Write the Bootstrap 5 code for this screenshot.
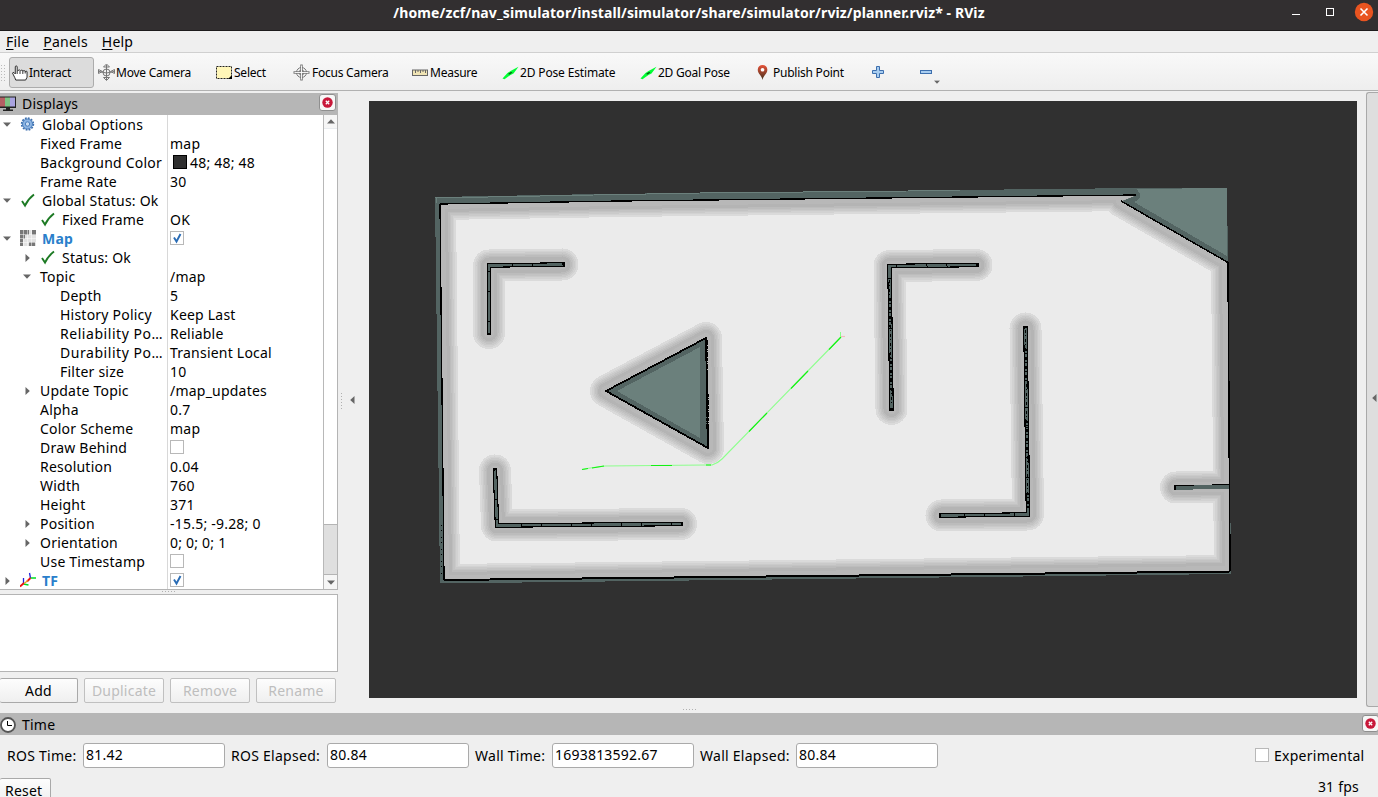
<!DOCTYPE html>
<html lang="en">
<head>
<meta charset="utf-8">
<title>RViz</title>
<link href="https://cdn.jsdelivr.net/npm/bootstrap@5.3.0/dist/css/bootstrap.min.css" rel="stylesheet">
<style>
body{width:1378px;height:797px;overflow:hidden;background:#efefef;color:#000;font:14px/19px "Noto Sans","Open Sans",sans-serif;letter-spacing:.22px}
svg{display:block;flex:none}
.titlebar{height:31px;background:#322f30;border-bottom:1px solid #1d1b1c;color:#fff;font-weight:700;font-size:14px;letter-spacing:.1px;line-height:26px}
.winbtns{right:4px;top:2px}
.menus{height:21px;padding-left:6px;gap:14px;line-height:22px}
.menus u{text-underline-offset:2px}
.tools{height:39px;border-top:1px solid #d0d0d0;border-bottom:1px solid #b1b1b1;background:linear-gradient(#f9f9f9,#eee);font-size:12px;letter-spacing:-.24px}
.tool{height:31px;margin-top:4px;line-height:30px;white-space:nowrap}
.tool.on{background:#dcdcdc;border:1px solid #acacac;border-radius:3px}
.tool svg{margin-right:1px}
.grip{width:5px;height:17px;background:radial-gradient(circle,#bbb 0 .6px,transparent .9px) 0 0/3px 3px}
.mid{height:622px;padding-top:2px}
.dock{width:338px}
.dhead{height:22px;background:#b6b6b6;line-height:22px}
.closebtn{width:17px;height:17px;border:1px solid #8f8f8f;border-radius:3px;background:#f7f7f7}
.tree{height:475px;background:#fff;border-right:1px solid #b4b4b4;border-bottom:1px solid #b4b4b4;overflow:hidden}
.tcol1{width:168px;border-right:1px solid #d8d8d8}
.trow{height:19px;white-space:nowrap;line-height:19px}
.lv1{padding-left:20px}.lv2{padding-left:40px}
.tw{width:14px;margin-right:6px;flex:none;display:flex;justify-content:center}
.ic{width:16px;margin-right:6px;margin-top:-2px;flex:none}
.tcol2{padding-left:2px}
.disp{color:#2a7fcb;font-weight:700}
.cbox{width:14px;height:14px;border:1px solid #b8b8b8;background:#fff;flex:none}
.trow .cbox{margin-top:-2px}
.sbar{width:14px;border-left:1px solid #b8b8b8;background:#fff}
.sbtn{height:14px;background:#f6f6f6}
.thumb{height:51px;background:#dfdfdf;border-top:1px solid #b4b4b4;border-bottom:1px solid #b4b4b4}
.help{height:78px;background:#fff;border:1px solid #b4b4b4;border-left:0}
.dots{background:radial-gradient(circle,#b0b0b0 0 .6px,transparent .9px) 0 0/3px 3px}
.qbtn{height:25px;border:1px solid #a9a9a9;border-radius:2px;background:linear-gradient(#fdfdfd,#efefef);text-align:center;line-height:23px}
.qbtn.off{color:#bebebe;border-color:#c0c0c0}
.view{width:988px;height:597px;margin-top:8px}
.strip{width:12px;height:615px;margin-left:9px;margin-top:-1px;padding-bottom:4px;border:1px solid #a9a9a9;border-right:0;border-radius:3px 0 0 3px;background:#dedede}
.timerow{height:27px;margin-top:7px}
.timerow span{white-space:nowrap;letter-spacing:.27px}
.field{width:142px;height:25px;border:1px solid #aaa;border-radius:3px;background:#fff;padding-left:2px;line-height:22px}
</style>
</head>
<body>
<svg width="0" height="0" class="position-absolute">
<defs>
<symbol id="dn" viewBox="0 0 8 5"><path d="M0 .5h8L4 4.8z" fill="#666"/></symbol>
<symbol id="rt" viewBox="0 0 5 8"><path d="M.5 0v8L4.800 4z" fill="#666"/></symbol>
<symbol id="ok" viewBox="0 0 16 16"><path d="M2 9l3 4.500C7 9.500 10 5.500 14 2.500" fill="none" stroke="#1d7a24" stroke-width="1.900"/></symbol>
<symbol id="tick" viewBox="0 0 12 12"><path d="M3 5.500l2.500 4L9.500 2" fill="none" stroke="#2a6cb5" stroke-width="1.900"/></symbol>
<symbol id="cross" viewBox="0 0 11 11"><circle cx="5.500" cy="5.500" r="5.200" fill="#c8183a"/><path d="M3.800 3.800l3.400 3.400m0-3.400L3.800 7.200" stroke="#fff" stroke-width="1.300"/></symbol>
<symbol id="arrow" viewBox="0 0 16 14"><path d="M0 12.500L5 7l3-2L16 .8 11 7.500 8 9 2 13.200z" fill="#0f3"/><path d="M5.500 8l3-2 1.500.5-3 2z" fill="#0a4a14"/></symbol>
</defs>
</svg>

<header class="titlebar position-relative text-center">/home/zcf/nav_simulator/install/simulator/share/simulator/rviz/planner.rviz* - RViz
<svg class="winbtns position-absolute" width="84" height="20"><path d="M2 12.500h8" stroke="#fff"/><rect x="36.500" y="6.500" width="7" height="7" fill="none" stroke="#fff"/><circle cx="74" cy="10" r="9.200" fill="#e95420"/><path d="M70.500 6.500l7 7m0-7l-7 7" stroke="#fff" stroke-width="1.600"/></svg>
</header>
<nav class="menus d-flex"><span><u>F</u>ile</span><span><u>P</u>anels</span><span><u>H</u>elp</span></nav>

<div class="tools d-flex">
 <div class="grip" style="margin-top:11px"></div>
 <div class="tool on d-flex align-items-center ms-1" style="width:85px;padding-left:2px">
  <svg width="16" height="16" viewBox="0 0 17 16"><path d="M5.500 9V1.500q0-1-1-1t-1 1V9L2 7.500q-1-.5-1.500.5L3 13l1 2.500h10.500l1.500-3V6.500q-1-1-2 0 0-1-1-1t-1.500.5q0-1-1-1t-1.500.5q-1-1.500-3 0" fill="#fff" stroke="#222"/><path d="M8.500 6v3m3-3v3m2.500-2.500v2" stroke="#222"/></svg>Interact</div>
 <div class="tool d-flex align-items-center" style="margin-left:4px;width:118px">
  <svg width="17" height="17" viewBox="0 0 17 17" fill="none" stroke="#777"><path d="M8.500 1v15M1 7.500q7.500 3 15 0M8.500 0l-3 3h6zM8.500 16.500l-3-3h6zM.5 5.500v4l4-2zM16.500 5.500v4l-4-2z"/><circle cx="8.500" cy="8.500" r="3.500"/></svg>Move Camera</div>
 <div class="tool d-flex align-items-center" style="width:77px">
  <svg width="17" height="14" viewBox="0 0 17 14"><rect x=".5" y=".5" width="15" height="12" fill="#fff6b8" stroke="#222" stroke-dasharray="2 1"/><path d="M16 9v4h-4z"/></svg>Select</div>
 <div class="tool d-flex align-items-center" style="width:119px">
  <svg width="18" height="17" viewBox="0 0 18 17" fill="none" stroke="#777"><circle cx="8.500" cy="8.500" r="5"/><circle cx="8.500" cy="8.500" r="2.500"/><path d="M8.500.500v16M.500 8.500h16" stroke-width="2.500"/><path d="M8.500 1.500v14M1.500 8.500h14" stroke="#fff" stroke-width=".9"/></svg>Focus Camera</div>
 <div class="tool d-flex align-items-center" style="width:90px">
  <svg width="17" height="8" viewBox="0 0 17 8"><rect x=".5" y="1" width="15" height="5.500" fill="#f0e4b4" stroke="#666"/><path d="M3.500 1v3m2.500-3v2m2.500-2v3m2.500-3v2m2.500-2v3" stroke="#666"/></svg>Measure</div>
 <div class="tool d-flex align-items-center" style="width:138px;letter-spacing:-.15px"><svg width="17" height="14"><use href="#arrow"/></svg>2D Pose Estimate</div>
 <div class="tool d-flex align-items-center" style="width:117px"><svg width="17" height="14"><use href="#arrow"/></svg>2D Goal Pose</div>
 <div class="tool d-flex align-items-center" style="width:114px">
  <svg width="12" height="17" viewBox="0 0 13 17" class="me-1"><defs><linearGradient id="pin" x2="0" y2="1"><stop stop-color="#e8533a"/><stop offset="1" stop-color="#42301c"/></linearGradient></defs><path d="M6 16.500C5.500 12 .8 10 .8 5.500a5.200 5.200 0 0110.400 0C11.200 10 6.500 12 6 16.500z" fill="url(#pin)"/><circle cx="6" cy="5.500" r="2" fill="#fff"/></svg>Publish Point</div>
 <div class="tool d-flex align-items-center"><svg width="14" height="14" viewBox="0 0 14 14"><path d="M5.500 .5h3v4h4v3h-4v4h-3v-4h-4v-3h4z" fill="#a8cdf0" stroke="#3d6fae"/></svg></div>
 <div class="tool d-flex align-items-center position-relative" style="margin-left:34px"><svg width="13" height="5"><rect x=".5" y=".5" width="11" height="3" fill="#a8cdf0" stroke="#3d6fae"/></svg><svg class="position-absolute" style="left:14px;top:23px" width="6" height="4" viewBox="0 0 8 5"><use href="#dn"/></svg></div>
</div>

<main class="mid d-flex">
<aside class="dock d-flex flex-column">
 <div class="dhead d-flex"><svg style="margin-top:3px" width="16" height="16" viewBox="0 0 16 16"><path d="M0 .5h16v11.500H0z" fill="#222"/><path d="M0 1.500h5v9H0z" fill="#b56064"/><path d="M5 1.500h5v9H5z" fill="#7dc484"/><path d="M10 1.500h5v9H10z" fill="#a9a3e0"/><path d="M6 12h4v1.500h3V15H3v-1.500h3z" fill="#222"/></svg><span class="flex-fill" style="padding-left:6px;line-height:21px">Displays</span><div class="closebtn d-flex justify-content-center align-items-center" style="margin:1px 2px 0 0"><svg width="11" height="11"><use href="#cross"/></svg></div></div>
 <div class="tree d-flex">
  <div class="tcol1">
   <div class="trow d-flex align-items-center"><i class="tw"><svg width="8" height="5"><use href="#dn"/></svg></i><svg class="ic" width="16" height="16" viewBox="0 0 16 16"><circle cx="7.500" cy="8" r="5.800" fill="none" stroke="#3d6fae" stroke-width="1.800" stroke-dasharray="1.800 1.200"/><circle cx="7.500" cy="8" r="5" fill="#8db4e2" stroke="#4a7fbd"/><circle cx="7.500" cy="8" r="2.200" fill="#c9dcf2" stroke="#4a7fbd"/></svg>Global Options</div>
   <div class="trow d-flex lv1"><i class="tw"></i>Fixed Frame</div>
   <div class="trow d-flex lv1"><i class="tw"></i>Background Color</div>
   <div class="trow d-flex lv1"><i class="tw"></i>Frame Rate</div>
   <div class="trow d-flex align-items-center"><i class="tw"><svg width="8" height="5"><use href="#dn"/></svg></i><svg class="ic" width="16" height="16"><use href="#ok"/></svg>Global Status: Ok</div>
   <div class="trow d-flex align-items-center lv1"><i class="tw"></i><svg class="ic" width="16" height="16"><use href="#ok"/></svg>Fixed Frame</div>
   <div class="trow d-flex align-items-center"><i class="tw"><svg width="8" height="5"><use href="#dn"/></svg></i><svg class="ic" width="16" height="16" viewBox="0 0 16 16"><path d="M0 0h16v16H0z" fill="#e2e2e2"/><path d="M0 0h9v5H5v4H3v7H0zM12 0h4v5h-4zM9 12h6v4H9z" fill="#777"/><path d="M3.500 0v16m4-16v16m4-16v16M0 4.500h16M0 8.500h16m-16 4h16" stroke="#fff" stroke-width=".5"/></svg><span class="disp">Map</span></div>
   <div class="trow d-flex align-items-center lv1"><i class="tw"><svg width="5" height="8"><use href="#rt"/></svg></i><svg class="ic" width="16" height="16"><use href="#ok"/></svg>Status: Ok</div>
   <div class="trow d-flex align-items-center lv1"><i class="tw"><svg width="8" height="5"><use href="#dn"/></svg></i>Topic</div>
   <div class="trow d-flex lv2"><i class="tw"></i>Depth</div>
   <div class="trow d-flex lv2"><i class="tw"></i>History Policy</div>
   <div class="trow d-flex lv2" style="letter-spacing:.55px"><i class="tw"></i>Reliability Po…</div>
   <div class="trow d-flex lv2" style="letter-spacing:.55px"><i class="tw"></i>Durability Po…</div>
   <div class="trow d-flex lv2"><i class="tw"></i>Filter size</div>
   <div class="trow d-flex align-items-center lv1"><i class="tw"><svg width="5" height="8"><use href="#rt"/></svg></i>Update Topic</div>
   <div class="trow d-flex lv1"><i class="tw"></i>Alpha</div>
   <div class="trow d-flex lv1"><i class="tw"></i>Color Scheme</div>
   <div class="trow d-flex lv1"><i class="tw"></i>Draw Behind</div>
   <div class="trow d-flex lv1"><i class="tw"></i>Resolution</div>
   <div class="trow d-flex lv1"><i class="tw"></i>Width</div>
   <div class="trow d-flex lv1"><i class="tw"></i>Height</div>
   <div class="trow d-flex align-items-center lv1"><i class="tw"><svg width="5" height="8"><use href="#rt"/></svg></i>Position</div>
   <div class="trow d-flex align-items-center lv1"><i class="tw"><svg width="5" height="8"><use href="#rt"/></svg></i>Orientation</div>
   <div class="trow d-flex lv1"><i class="tw"></i>Use Timestamp</div>
   <div class="trow d-flex align-items-center"><i class="tw"><svg width="5" height="8"><use href="#rt"/></svg></i><svg class="ic" width="16" height="16" viewBox="0 0 16 16" fill="none" stroke-width="1.300"><path d="M9.500 1l1 5M3.500 6v6" stroke="#22d"/><path d="M10.500 6h5.500M3.500 12l5 1" stroke="#0d2"/><path d="M10.500 6L7 9.500M4 11l-4 3.500" stroke="#e11" stroke-width="1.800"/><path d="M8 8.500l-4 3" stroke="#e8a020"/></svg><span class="disp">TF</span></div>
  </div>
  <div class="tcol2 flex-fill">
   <div class="trow"></div>
   <div class="trow">map</div>
   <div class="trow d-flex align-items-center"><i style="width:14px;height:14px;margin:-1px 3px 0;background:#303030;border:1px solid #000"></i>48; 48; 48</div>
   <div class="trow">30</div>
   <div class="trow"></div>
   <div class="trow">OK</div>
   <div class="trow d-flex align-items-center"><i class="cbox"><svg width="12" height="12"><use href="#tick"/></svg></i></div>
   <div class="trow"></div>
   <div class="trow">/map</div>
   <div class="trow">5</div>
   <div class="trow">Keep Last</div>
   <div class="trow">Reliable</div>
   <div class="trow">Transient Local</div>
   <div class="trow">10</div>
   <div class="trow">/map_updates</div>
   <div class="trow">0.7</div>
   <div class="trow">map</div>
   <div class="trow d-flex align-items-center"><i class="cbox"></i></div>
   <div class="trow">0.04</div>
   <div class="trow">760</div>
   <div class="trow">371</div>
   <div class="trow">-15.5; -9.28; 0</div>
   <div class="trow">0; 0; 0; 1</div>
   <div class="trow d-flex align-items-center"><i class="cbox"></i></div>
   <div class="trow d-flex align-items-center"><i class="cbox"><svg width="12" height="12"><use href="#tick"/></svg></i></div>
  </div>
  <div class="sbar d-flex flex-column">
   <div class="sbtn d-flex justify-content-center align-items-center border-bottom border-secondary-subtle"><svg width="8" height="5" style="transform:scaleY(-1)"><use href="#dn"/></svg></div>
   <div class="flex-fill"></div><div class="thumb"></div>
   <div class="sbtn d-flex justify-content-center align-items-center"><svg width="8" height="5"><use href="#dn"/></svg></div>
  </div>
 </div>
 <div class="d-flex justify-content-center" style="height:4px"><i class="dots" style="width:16px;height:3px"></i></div>
 <div class="help"></div>
 <div class="d-flex" style="gap:6px;margin-top:6px">
  <div class="qbtn border-start-0" style="width:78px">Add</div><div class="qbtn off" style="width:80px">Duplicate</div><div class="qbtn off" style="width:80px">Remove</div><div class="qbtn off" style="width:80px">Rename</div>
 </div>
</aside>
<div class="d-flex align-items-center" style="width:31px;padding-bottom:6px"><i class="dots" style="width:3px;height:17px;margin-left:2px"></i><svg width="5" height="8" style="transform:scaleX(-1);margin-left:7px"><use href="#rt"/></svg></div>

<section class="d-flex flex-column align-items-start">
<svg class="view" viewBox="369 101 988 597" shape-rendering="crispEdges">
<defs>
 <path id="room" d="M440 204L620 201 1136 195 1121 201 1227 262 1230 571 444 580z"/>
 <clipPath id="inside"><use href="#room"/></clipPath>
 <g id="walls"><path d="M562.500 264.500L489 265.500 489 333"/><path d="M495 470.500L497 525.500 681 524"/><path d="M976.500 265L889.500 266 891.500 409"/><path d="M1025.500 328.500L1028 514.500 941.500 515.500"/><path d="M1176 487.500L1228 486.500"/></g>
 <g id="infl" fill="none" stroke-linejoin="round" stroke-linecap="round"><use href="#walls"/><path d="M606 391L706 338 708 448z"/><use href="#room"/></g>
</defs>
<rect x="369" y="101" width="988" height="597" fill="#303030"/>
<path d="M435 197L600 194 1140 188 1227 188 1228 262 1231 574 440 583.500z" fill="#536462"/>
<path d="M435 198L700 193 960 190.500 M436 203v-6" stroke="#6b807c" fill="none"/>
<path d="M1137 189L1227 188 1227 256 1134 202q7-2 6-8z" fill="#6b807c"/>
<use href="#room" fill="#ebebeb"/>
<g clip-path="url(#inside)">
 <use href="#infl" stroke="#dadada" stroke-width="32"/>
 <use href="#infl" stroke="#d2d2d2" stroke-width="28"/>
 <use href="#infl" stroke="#cacaca" stroke-width="25"/>
 <use href="#infl" stroke="#c3c3c3" stroke-width="22"/>
 <use href="#infl" stroke="#bcbcbc" stroke-width="19"/>
 <use href="#infl" stroke="#b4b4b4" stroke-width="16"/>
 <use href="#infl" stroke="#b8b8b8" stroke-width="10"/>
</g>
<path d="M606 391L706 338 708 448z" fill="#536462" stroke="#000" stroke-width="1.800" stroke-linejoin="round"/>
<path d="M706.500 340L708 447" stroke="#000" stroke-width="2.500" stroke-dasharray="5 1 3 1 1 1"/>
<path d="M617 391L700 347v91z" fill="#6b807c"/>
<g fill="none" stroke-linecap="square"><use href="#walls" stroke="#000" stroke-width="4.600"/></g>
<g fill="none" stroke="#536462"><use href="#walls" stroke-width="2.400" stroke-dasharray="29 1 19 1"/><path d="M1176 488L1230 486.500" stroke-width="4"/></g>
<g fill="none" stroke="#000"><path d="M1025.500 330L1028 510M889.500 280L891.500 405" stroke-dasharray="3 2 1 3" stroke-width="1.500"/>
<path d="M440 204L620 201 880 198 1136 195M1121 201L1227 262M440 204L441 300 443 480 444 580" stroke-width="1.300"/><path d="M1121 201L1228 262.500 1230 571" stroke-width="1.500"/><path d="M444 580L1230 571.500" stroke-width="2"/><path d="M441 525v50" stroke-dasharray="1 4 1 6"/></g>
<g fill="none" stroke="#8cff8c" stroke-width="1.100" shape-rendering="geometricPrecision"><path d="M582 469.500L590 468 605 466 705 465 712 465Q718 463 722 459L841 337"/><path d="M582 469.500L588 468.500M592 468L604 466M651 465.500H672M706 465h5M749 431.500L767 413M791 388.500L808 371M829 349.500L841 337" stroke="#13f013"/><path d="M840.500 332v5" stroke-width="1"/><path d="M841 336.500h4" stroke="#f1bcbc"/></g>
</svg>
<i class="dots" style="width:16px;height:3px;margin-top:10px;margin-left:313px"></i>
</section>
<div class="strip d-flex align-items-center justify-content-center"><svg width="5" height="8" style="transform:scaleX(-1);margin-left:3px"><use href="#rt"/></svg></div>
</main>

<footer>
 <div class="dhead d-flex"><svg style="margin-top:4px" width="16" height="16" viewBox="0 0 16 16"><circle cx="8" cy="8" r="7" fill="#fff" stroke="#555" stroke-width="1.800"/><path d="M7.500 4v4.500H12" fill="none" stroke="#000"/></svg><span class="flex-fill" style="padding-left:6px;line-height:23px">Time</span><div class="closebtn d-flex justify-content-center align-items-center" style="margin-top:2px;margin-right:-1px"><svg width="11" height="11"><use href="#cross"/></svg></div></div>
 <div class="timerow d-flex align-items-center">
  <span style="width:83px;padding-left:7px">ROS Time:</span><div class="field">81.42</div>
  <span style="width:102px;padding-left:6px">ROS Elapsed:</span><div class="field">80.84</div>
  <span style="width:83px;padding-left:6px">Wall Time:</span><div class="field">1693813592.67</div>
  <span style="width:102px;padding-left:6px">Wall Elapsed:</span><div class="field">80.84</div>
  <i class="cbox ms-auto" style="margin-top:-1px"></i><span style="width:109px;padding-left:5px">Experimental</span>
 </div>
 <div class="d-flex justify-content-between" style="margin-top:9px"><div class="qbtn border-start-0 text-start" style="width:51px;padding-left:5px">Reset</div><span style="margin:-1px 19px 0 0">31 fps</span></div>
</footer>
<script src="https://cdn.jsdelivr.net/npm/bootstrap@5.3.0/dist/js/bootstrap.bundle.min.js"></script>
</body>
</html>
